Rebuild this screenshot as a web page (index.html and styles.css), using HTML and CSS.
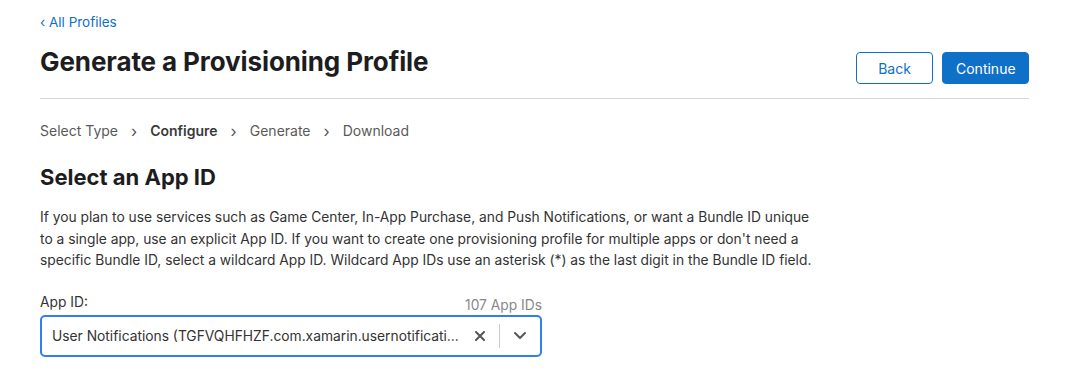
FILE: index.html
```html
<!DOCTYPE html>
<html lang="en">
<head>
    <meta charset="UTF-8">
    <title>Generate a Provisioning Profile</title>
    <link rel="stylesheet" href="styles.css">
</head>
<body>
    <div class="page">
        <a class="back-link" href="#">&lsaquo; All Profiles</a>

        <header class="page-header">
            <h1>Generate a Provisioning Profile</h1>
            <div class="actions">
                <button class="btn btn-outline">Back</button>
                <button class="btn btn-primary">Continue</button>
            </div>
        </header>

        <nav class="steps">
            <span>Select Type</span>
            <span class="sep">&rsaquo;</span>
            <span class="current">Configure</span>
            <span class="sep">&rsaquo;</span>
            <span>Generate</span>
            <span class="sep">&rsaquo;</span>
            <span>Download</span>
        </nav>

        <h2>Select an App ID</h2>
        <p class="intro">If you plan to use services such as Game Center, In-App Purchase, and Push Notifications, or want a Bundle ID unique to a single app, use an explicit App ID. If you want to create one provisioning profile for multiple apps or don't need a specific Bundle ID, select a wildcard App ID. Wildcard App IDs use an asterisk (*) as the last digit in the Bundle ID field.</p>

        <div class="field">
            <div class="field-label">
                <label>App ID:</label>
                <span class="count">107 App IDs</span>
            </div>
            <div class="select">
                <span class="value">User Notifications (TGFVQHFHZF.com.xamarin.usernotifications)</span>
                <span class="clear">
                    <svg width="12" height="12" viewBox="0 0 12 12"><path d="M2 2 L10 10 M10 2 L2 10" stroke="#555" stroke-width="2" stroke-linecap="round"/></svg>
                </span>
                <span class="divider"></span>
                <span class="toggle">
                    <svg width="14" height="9" viewBox="0 0 14 9"><path d="M2 2 L7 7 L12 2" fill="none" stroke="#555" stroke-width="2" stroke-linecap="round" stroke-linejoin="round"/></svg>
                </span>
            </div>
        </div>
    </div>
</body>
</html>
```

FILE: styles.css
```css
body {
    margin: 0;
    font-family: Inter, "Noto Sans", sans-serif;
    color: #1d1d1f;
    background-color: #fff;
}

.page {
    width: 989px;
    margin-left: 40px;
    padding-top: 11px;
}

.back-link {
    display: inline-block;
    font-size: 13.5px;
    color: #0f70c8;
    text-decoration: none;
    line-height: 18px;
}

.page-header {
    display: flex;
    justify-content: space-between;
    align-items: center;
    margin-top: 18px;
    padding-bottom: 14px;
    border-bottom: 1px solid #d6d6d6;
}

h1 {
    margin: 0;
    font-size: 26px;
    font-weight: 700;
    letter-spacing: -0.1px;
    line-height: 32px;
    color: #1d1d1f;
    position: relative;
    top: -5px;
}

.actions {
    display: flex;
    gap: 9px;
    margin-top: 3px;
}

.btn {
    height: 32px;
    padding: 0 13px;
    font-family: inherit;
    font-size: 14px;
    border-radius: 4px;
    cursor: pointer;
}

.btn-outline {
    width: 77px;
    background-color: #fff;
    color: #0f70c8;
    border: 1px solid #0f70c8;
}

.btn-primary {
    width: 87px;
    background-color: #0f70c8;
    color: #fff;
    border: 1px solid #0f70c8;
}

.steps {
    display: flex;
    gap: 11px;
    margin-top: 23px;
    font-size: 14px;
    line-height: 18px;
    color: #5a5a5a;
}

.steps .current {
    font-weight: 600;
    color: #3a3a3a;
}

.steps .sep {
    font-size: 16px;
    color: #555;
    padding: 0 2px;
}

h2 {
    margin: 23px 0 0;
    font-size: 22px;
    font-weight: 700;
    line-height: 28px;
    color: #1d1d1f;
}

.intro {
    width: 784px;
    margin: 16px 0 0;
    font-size: 13.8px;
    line-height: 21.5px;
    color: #333;
}

.field {
    width: 502px;
    margin-top: 21px;
}

.field-label {
    display: flex;
    justify-content: space-between;
    align-items: flex-end;
    font-size: 13.8px;
    line-height: 18px;
    color: #333;
}

.field-label .count {
    color: #888;
    position: relative;
    top: 3px;
}

.select {
    display: flex;
    align-items: center;
    height: 38px;
    margin-top: 4px;
    border: 2px solid #2f7ff0;
    border-radius: 5px;
    padding-left: 10px;
}

.select .value {
    flex: 1;
    font-size: 13.8px;
    color: #333;
    white-space: nowrap;
    overflow: hidden;
    text-overflow: ellipsis;
}

.select .clear {
    display: flex;
    padding: 0 13px 0 12px;
}

.select .divider {
    width: 1px;
    height: 24px;
    background-color: #ccc;
}

.select .toggle {
    display: flex;
    padding: 0 13px 0 13px;
}
```
